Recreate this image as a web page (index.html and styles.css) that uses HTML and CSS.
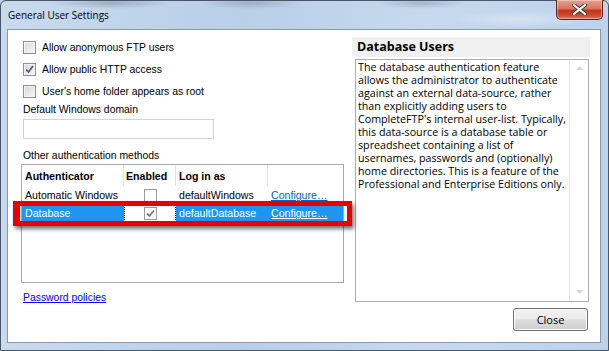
FILE: index.html
```html
<!DOCTYPE html>
<html>
<head>
<meta charset="utf-8">
<link rel="stylesheet" href="styles.css">
</head>
<body>
<div class="window">
  <div class="titlebar">
    <span class="title">General User Settings</span>
    <div class="close-x">
      <svg width="15" height="11" viewBox="0 0 15 11"><path d="M2 1 L13 10 M13 1 L2 10" stroke="#3b3b3b" stroke-width="4" stroke-linecap="square"/><path d="M2 1 L13 10 M13 1 L2 10" stroke="#ffffff" stroke-width="2" stroke-linecap="square"/></svg>
    </div>
  </div>
  <div class="client">
    <div class="left">
      <div class="check-row"><span class="cb"></span><span>Allow anonymous FTP users</span></div>
      <div class="check-row"><span class="cb checked"><svg width="9" height="9" viewBox="0 0 9 9"><path d="M1 4.5 L3.5 7 L8 1" fill="none" stroke="#4a5b82" stroke-width="1.7"/></svg></span><span>Allow public HTTP access</span></div>
      <div class="check-row"><span class="cb"></span><span>User's home folder appears as root</span></div>
      <div class="label first">Default Windows domain</div>
      <div class="input"></div>
      <div class="label second">Other authentication methods</div>
      <div class="grid">
        <div class="row head">
          <div class="c c1">Authenticator</div>
          <div class="c c2">Enabled</div>
          <div class="c c3">Log in as</div>
          <div class="c c4"></div>
        </div>
        <div class="row">
          <div class="c c1">Automatic Windows</div>
          <div class="c c2 center"><span class="gcb"></span></div>
          <div class="c c3">defaultWindows</div>
          <div class="c c4"><span class="link">Configure…</span></div>
        </div>
        <div class="row sel">
          <div class="c c1">Database</div>
          <div class="c c2 center focus"><span class="gcb"><svg width="11" height="11" viewBox="0 0 11 11"><path d="M2 5.5 L4.5 8 L9 2.5" fill="none" stroke="#7a7a7a" stroke-width="1.8"/></svg></span></div>
          <div class="c c3">defaultDatabase</div>
          <div class="c c4"><span class="link">Configure…</span></div>
        </div>
        <div class="redbox"></div>
      </div>
      <div class="pw"><span class="pwlink">Password policies</span></div>
    </div>
    <div class="right">
      <div class="panel-head">Database Users</div>
      <div class="desc">
        <div class="desc-text">
          <div class="ln">The database authentication feature</div>
          <div class="ln">allows the administrator to authenticate</div>
          <div class="ln">against an external data-source, rather</div>
          <div class="ln">than explicitly adding users to</div>
          <div class="ln">CompleteFTP's internal user-list. Typically,</div>
          <div class="ln">this data-source is a database table or</div>
          <div class="ln">spreadsheet containing a list of</div>
          <div class="ln">usernames, passwords and (optionally)</div>
          <div class="ln">home directories. This is a feature of the</div>
          <div class="ln">Professional and Enterprise Editions only.</div>
        </div>
        <div class="scroll">
          <svg width="7" height="4" viewBox="0 0 7 4"><path d="M0 4 L3.5 0 L7 4 Z" fill="#d4d4d4"/></svg>
          <svg width="7" height="4" viewBox="0 0 7 4"><path d="M0 0 L3.5 4 L7 0 Z" fill="#d4d4d4"/></svg>
        </div>
      </div>
      <div class="btn-row"><div class="btn">Close</div></div>
    </div>
  </div>
</div>
</body>
</html>
```

FILE: styles.css
```css
html, body {
  margin: 0;
  padding: 0;
  background: #bcd2ea;
}
.window {
  width: 609px;
  height: 351px;
  box-sizing: border-box;
  border: 1px solid #4a5566;
  border-radius: 6px 6px 0 0;
  padding: 0 7px 7px 6px;
  display: flex;
  flex-direction: column;
  background:
    radial-gradient(ellipse 60px 6px at 110px 2px, rgba(90,100,115,0.35), transparent),
    radial-gradient(ellipse 50px 6px at 250px 2px, rgba(90,100,115,0.3), transparent),
    radial-gradient(ellipse 45px 6px at 420px 2px, rgba(90,100,115,0.3), transparent),
    radial-gradient(ellipse 70px 8px at 520px 18px, rgba(255,255,255,0.35), transparent),
    linear-gradient(90deg, #c8daee 0%, #b8cfe8 40%, #c6d9ee 70%, #bdd3eb 100%);
}
.titlebar {
  height: 28px;
  display: flex;
  align-items: flex-start;
  font-family: "Open Sans", "Liberation Sans", sans-serif;
  font-size: 10px;
  color: #000;
}
.title {
  margin-left: 1px;
  margin-top: 6px;
  line-height: 16px;
}
.close-x {
  margin-left: auto;
  margin-top: -1px;
  margin-right: -2px;
  width: 47px;
  height: 20px;
  box-sizing: border-box;
  border: 1px solid #5c2620;
  border-top: none;
  border-radius: 0 0 5px 5px;
  background: linear-gradient(#e7a293 0%, #d9755f 45%, #c2341b 55%, #cc4a2f 80%, #dd7a5d 100%);
  display: flex;
  align-items: center;
  justify-content: center;
  box-shadow: inset 0 0 0 1px rgba(255,255,255,0.35);
}
.client {
  flex: 1;
  background: #ffffff;
  border: 1px solid #8c98a6;
  display: flex;
  padding-top: 7px;
}
.left {
  margin-left: 13px;
  width: 323px;
  display: flex;
  flex-direction: column;
  font-family: "Liberation Sans", Arial, sans-serif;
  font-size: 10.4px;
  color: #000;
}
.check-row {
  height: 20px;
  display: flex;
  align-items: center;
  gap: 6px;
  padding-left: 2px;
  margin-bottom: 2px;
}
.cb {
  width: 13px;
  height: 13px;
  box-sizing: border-box;
  border: 1px solid #8e8f8f;
  background: linear-gradient(135deg, #d8d8d8, #f7f7f7);
  box-shadow: inset 0 0 0 1px #f4f4f4;
  display: flex;
  align-items: center;
  justify-content: center;
}
.label {
  height: 14px;
  line-height: 14px;
  padding-left: 2px;
}
.label.second { margin-top: 10px; }
.input {
  margin-top: 2px;
  margin-left: 2px;
  width: 191px;
  height: 20px;
  box-sizing: border-box;
  border: 1px solid #d2d2d2;
  background: #fff;
}
.grid {
  position: relative;
  margin-top: 1px;
  height: 119px;
  box-sizing: border-box;
  border: 1px solid #a9a9a9;
  font-size: 10.6px;
}
.row {
  display: grid;
  grid-template-columns: 102px 52px 92px 1fr;
  height: 18px;
}
.row.head {
  height: 21px;
  font-weight: bold;
}
.c {
  display: flex;
  align-items: center;
  padding-left: 3px;
  box-sizing: border-box;
  white-space: nowrap;
}
.head .c1, .head .c2, .head .c3 {
  border-right: 1px solid #e3e3e3;
}
.head .c2 { padding-left: 2px; }
.center {
  justify-content: center;
  padding-left: 0;
}
.gcb {
  width: 13px;
  height: 13px;
  box-sizing: border-box;
  border: 1px solid #9a9a9a;
  background: #fff;
  display: flex;
  align-items: center;
  justify-content: center;
  margin-left: 1px;
}
.link {
  color: #0066cc;
  text-decoration: underline;
}
.sel .c1, .sel .c3, .sel .c4 {
  background: #1d96f2;
  color: #fff;
}
.sel .link { color: #fff; }
.sel .focus {
  background: #fff;
  border: 1px dotted #000;
}
.redbox {
  position: absolute;
  left: -9px;
  top: 36px;
  width: 339px;
  height: 25px;
  box-sizing: border-box;
  border: 5px solid #e80000;
  border-left-width: 7px;
  box-shadow: 2px 3px 4px rgba(0,0,0,0.55);
}
.pw {
  margin-top: 8px;
  height: 14px;
  line-height: 14px;
  padding-left: 2px;
}
.pwlink {
  color: #0000ff;
  text-decoration: underline;
}
.right {
  margin-left: 8px;
  width: 238px;
  display: flex;
  flex-direction: column;
  font-family: "Open Sans", "Liberation Sans", sans-serif;
  font-size: 11px;
  color: #000;
}
.panel-head {
  height: 20px;
  line-height: 20px;
  background: #f0f0f0;
  font-weight: bold;
  font-size: 12.5px;
  padding-left: 5px;
}
.desc {
  margin-top: 2px;
  margin-left: 3px;
  width: 234px;
  height: 243px;
  box-sizing: border-box;
  border: 1px solid #acacac;
  display: flex;
}
.desc-text {
  flex: 1;
  padding: 1px 0 0 2px;
  font-size: 10.7px;
  min-width: 0;
}
.ln {
  height: 13px;
  line-height: 13px;
  white-space: nowrap;
}
.scroll {
  width: 18px;
  border-left: 1px solid #e4e4e4;
  display: flex;
  flex-direction: column;
  justify-content: space-between;
  align-items: center;
  padding: 6px 0 7px;
}
.btn-row {
  display: flex;
  justify-content: flex-end;
  margin-top: 6px;
  padding-right: 2px;
}
.btn {
  width: 75px;
  height: 23px;
  box-sizing: border-box;
  border: 1px solid #707070;
  border-radius: 3px;
  background: linear-gradient(#f2f2f2 0%, #ebebeb 48%, #dddddd 52%, #cfcfcf 100%);
  box-shadow: inset 0 0 0 1px #fcfcfc;
  display: flex;
  align-items: center;
  justify-content: center;
  font-size: 11px;
}
```
